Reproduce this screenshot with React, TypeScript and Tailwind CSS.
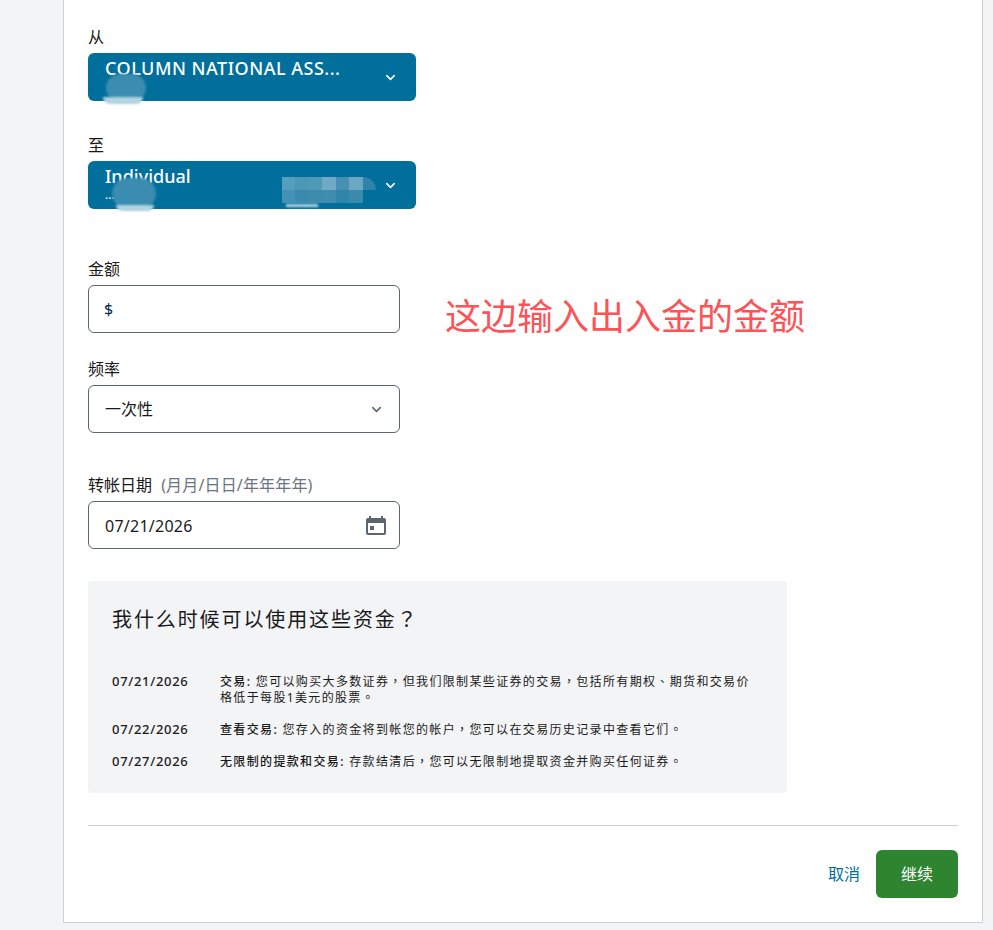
import React from "react";
import { ChevronDown } from "lucide-react";

const font = "font-['Noto_Sans','Noto_Sans_CJK_SC',sans-serif]";

function Blob({ className }: { className: string }) {
  return <div className={`absolute blur-[1px] ${className}`} />;
}

// Punctuation in the reference sits centred in its em box, as in the TC glyph set.
function Cjk({ text }: { text: string }) {
  return (
    <>
      {text.split(/([，、。？])/).map((part, i) =>
        /^[，、。？]$/.test(part) ? (
          <span key={i} className="font-['Noto_Sans_CJK_TC',sans-serif] leading-[0]">{part}</span>
        ) : (
          <React.Fragment key={i}>{part}</React.Fragment>
        )
      )}
    </>
  );
}

function Label({ children, className = "" }: { children: React.ReactNode; className?: string }) {
  return <div className={`h-6 text-base leading-6 text-[#1a1a1a] ${className}`}>{children}</div>;
}

function AccountButton({ title, sub, titleClass = "", children }: { title: string; sub?: string; titleClass?: string; children?: React.ReactNode }) {
  return (
    <div className="relative mt-1 flex h-12 w-[328px] items-start justify-between overflow-visible rounded-md bg-[#006f9b] pl-[17px] pr-[18px] text-white">
      <div className="flex flex-col">
        <div className={`text-lg leading-[30px] font-medium ${titleClass}`}>{title}</div>
        {sub && <div className="-mt-1 text-xs leading-4">{sub}</div>}
      </div>
      <ChevronDown className="mt-[17px] size-[15px]" strokeWidth={2.5} />
      {children}
    </div>
  );
}

function FieldBox({ children, className = "pr-3" }: { children: React.ReactNode; className?: string }) {
  return (
    <div className={`mt-1 flex h-12 w-[312px] items-center justify-between rounded-md border border-[#5b6670] bg-white pl-4 text-base text-[#1a1a1a] ${className}`}>
      {children}
    </div>
  );
}

function Row({ date, lead, text, className = "" }: { date: string; lead: string; text: string; className?: string }) {
  return (
    <div className={`flex items-start ${className}`}>
      <div className="-mt-px w-[108px] shrink-0 text-[13px] leading-4 font-medium tracking-[0.7px] text-[#1a1a1a]">{date}</div>
      <div className="w-[534px] text-xs leading-4 tracking-[1.35px] text-[#1a1a1a]">
        <span className="font-medium">{lead}</span> <Cjk text={text} />
      </div>
    </div>
  );
}

const mosaic = [
  "bg-[#559ebd]", "bg-[#4c97b8]", "bg-[#4f99b9]", "bg-[#6fa9c4]", "bg-[#4690b3]", "bg-[#6aa8c3]", "bg-[#2f83a8]",
  "bg-[#4591b3]", "bg-[#3a8aad]", "bg-[#3d8cae]", "bg-[#3f8dae]", "bg-[#2f84a9]", "bg-[#3a8aad]", "bg-[#006f9b]",
];

export default function App() {
  return (
    <div className={`relative min-h-[930px] w-full bg-[#f3f4f6] ${font}`}>
      <div className="ml-[63px] h-[923px] w-[920px] border-x border-b border-[#cdd1d6] bg-white px-6 pt-[25px]">
        <Label>从</Label>
        <AccountButton title="COLUMN NATIONAL ASS..." titleClass="tracking-[0.5px]">
          <Blob className="left-[18px] top-[21px] h-7 w-10 rounded-full bg-[#3a8cb0]" />
          <Blob className="left-[15px] top-[44px] h-[7px] w-10 rounded-b-full bg-[#b3d3e0]" />
        </AccountButton>

        <Label className="mt-8">至</Label>
        <AccountButton title="Individual" sub="...">
          <Blob className="left-6 top-[17px] h-[31px] w-11 rounded-full bg-[#3a8cb0]" />
          <Blob className="left-7 top-[44px] h-[6px] w-[38px] rounded-b-full bg-[#b3d3e0]" />
          <div className="absolute left-[194px] top-4 grid h-[26px] w-[94px] grid-cols-7 grid-rows-2 overflow-hidden rounded-r-2xl">
            {mosaic.map((c, i) => (
              <div key={i} className={c} />
            ))}
          </div>
          <Blob className="left-[198px] top-[43px] h-[3px] w-8 bg-[#b3d3e0]" />
        </AccountButton>

        <Label className="mt-12">金额</Label>
        <FieldBox>
          <span className="-ml-px text-[#00264d]">$</span>
        </FieldBox>

        <Label className="mt-6">频率</Label>
        <FieldBox className="pr-[15px]">
          <span>一次性</span>
          <ChevronDown className="size-[15px] text-[#5b6670]" strokeWidth={2.5} />
        </FieldBox>

        <Label className="mt-10">
          转帐日期 <span className="ml-[5px] tracking-[0.15px] text-[#6b7580]">(月月/日日/年年年年)</span>
        </Label>
        <FieldBox className="pr-[13px]">
          <span className="mt-[2px] tracking-[0.25px]">07/21/2026</span>
          <svg viewBox="0 0 20 19" className="h-[19px] w-5 text-[#5b6670]" fill="currentColor" aria-hidden="true">
            <path d="M3 0h2v2h10V0h2v2h1a2 2 0 0 1 2 2v13a2 2 0 0 1-2 2H2a2 2 0 0 1-2-2V4a2 2 0 0 1 2-2h1V0Zm-1 7v10h16V7H2Zm2 3h4v4H4v-4Z" fillRule="evenodd" />
          </svg>
        </FieldBox>

        <div className="mt-8 h-[212px] w-[699px] rounded-sm bg-[#f3f4f6] pl-6 pt-6">
          <div className="text-xl leading-[30px] tracking-[1.9px] text-[#1a1a1a]">
            <Cjk text="我什么时候可以使用这些资金？" />
          </div>
          <Row
            className="mt-[39px]"
            date="07/21/2026"
            lead="交易:"
            text="您可以购买大多数证券，但我们限制某些证券的交易，包括所有期权、期货和交易价格低于每股1美元的股票。"
          />
          <Row
            className="mt-4"
            date="07/22/2026"
            lead="查看交易:"
            text="您存入的资金将到帐您的帐户，您可以在交易历史记录中查看它们。"
          />
          <Row
            className="mt-4"
            date="07/27/2026"
            lead="无限制的提款和交易:"
            text="存款结清后，您可以无限制地提取资金并购买任何证券。"
          />
        </div>

        <div className="mt-8 border-t border-[#cdd1d6]" />
        <div className="mt-6 flex items-center justify-end">
          <span className="text-base text-[#006f9b]">取消</span>
          <button className="ml-4 h-12 w-[82px] rounded-md bg-[#2e842f] text-base text-white">继续</button>
        </div>
      </div>
      <div className="absolute left-[445px] top-[294px] text-[36px] leading-[45px] text-[#ff5257]">这边输入出入金的金额</div>
    </div>
  );
}
